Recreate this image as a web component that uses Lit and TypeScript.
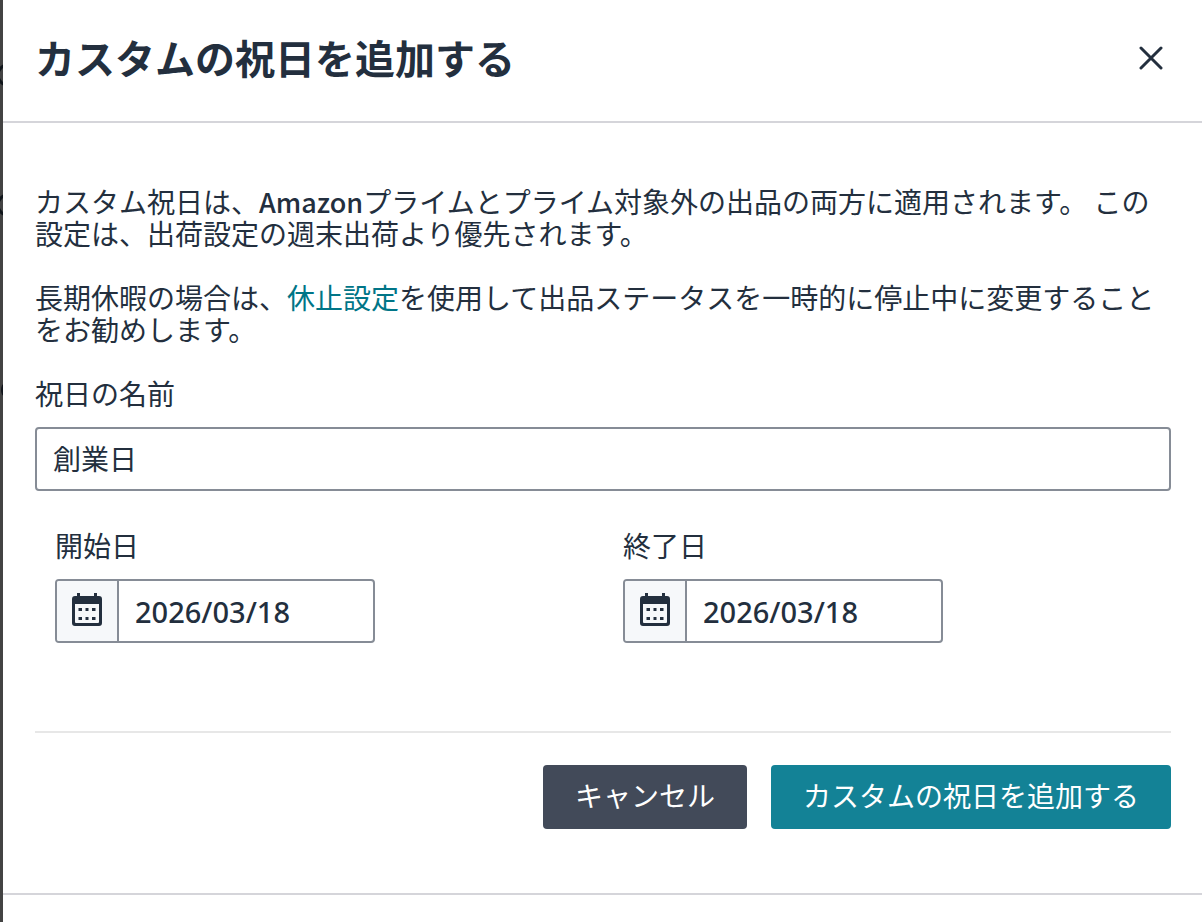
import { LitElement, html, css } from "lit";
import { customElement, property, state } from "lit/decorators.js";

@customElement("date-field")
class DateField extends LitElement {
  @property() label = "";
  @property() value = "";

  static styles = css`
    :host {
      display: block;
    }
    .label {
      display: block;
      line-height: 32px;
      margin-bottom: 18px;
    }
    .box {
      box-sizing: border-box;
      display: flex;
      width: 320px;
      max-width: 100%;
      height: 64px;
      border: 2px solid #868c96;
      border-radius: 4px;
      overflow: hidden;
      background: #fff;
    }
    .toggle {
      display: flex;
      align-items: flex-start;
      justify-content: center;
      flex: none;
      width: 62px;
      margin: 0;
      padding: 12px 0 0;
      border: 0;
      border-right: 2px solid #868c96;
      background: #f6f8fa;
      color: #232f3e;
      cursor: pointer;
    }
    .input {
      flex: 1;
      min-width: 0;
      padding: 0 16px;
      border: 0;
      outline: 0;
      background: transparent;
      font-family: "Noto Sans", sans-serif;
      font-size: 29px;
      font-weight: 500;
      color: inherit;
    }
  `;

  render() {
    return html`
      <label class="label" for="date">${this.label}</label>
      <div class="box">
        <button class="toggle" type="button" aria-label=${this.label}>
          <svg width="30" height="33" viewBox="0 0 30 33" aria-hidden="true">
            <path
              fill="currentColor"
              fill-rule="evenodd"
              d="M5 0h3v3h14V0h3v3h2a3 3 0 0 1 3 3v24a3 3 0 0 1-3 3H3a3 3 0 0 1-3-3V6a3 3 0 0 1 3-3h2zM3 11v18a1 1 0 0 0 1 1h22a1 1 0 0 0 1-1V11z"
            />
            <path
              fill="currentColor"
              d="M6.500 15h3.500v3h-3.500zM13.500 15h3v3h-3zM20 15h3.500v3H20zM6.500 24h3.500v3h-3.500zM13.500 24h3v3h-3zM20 24h3.500v3H20z"
            />
          </svg>
        </button>
        <input class="input" id="date" type="text" .value=${this.value} />
      </div>
    `;
  }
}

@customElement("app-root")
class AppRoot extends LitElement {
  @state() private holiday = "創業日";

  static styles = css`
    :host {
      display: flex;
      min-height: 100vh;
      font-family: "Noto Sans CJK JP", "Noto Sans", sans-serif;
      font-size: 28px;
      line-height: 32px;
      color: #232f3e;
      background: #fff;
    }
    .backdrop {
      flex: none;
      width: 3px;
      background: #434343;
    }
    .shade {
      display: block;
    }
    .dialog {
      flex: 1;
      min-width: 0;
    }
    .header {
      display: flex;
      align-items: flex-start;
      justify-content: space-between;
      padding: 26px 31px 32px 32px;
      border-bottom: 2px solid #d5d5da;
    }
    .title {
      margin: 0;
      font-size: 40px;
      line-height: 63px;
      font-weight: 700;
    }
    .close {
      display: flex;
      padding: 20px 8px 16px;
      margin: 0;
      border: 0;
      background: none;
      color: inherit;
      cursor: pointer;
    }
    .body {
      padding: 62px 31px 64px 32px;
      border-bottom: 2px solid #d5d5da;
    }
    .text {
      margin: 0 0 32px;
    }
    .latin {
      font-size: 27px;
      line-height: 1;
      font-weight: 500;
    }
    .link {
      color: #007587;
      text-decoration: none;
    }
    .label {
      display: block;
      margin-bottom: 18px;
    }
    .name {
      box-sizing: border-box;
      display: block;
      width: 100%;
      height: 64px;
      padding: 0 16px 2px;
      border: 2px solid #868c96;
      border-radius: 4px;
      outline: 0;
      background: #fff;
      font: inherit;
      color: inherit;
    }
    .dates {
      display: grid;
      grid-template-columns: 1fr 1fr;
      padding: 38px 0 88px;
      border-bottom: 2px solid #e7e7e7;
    }
    .date {
      padding: 0 20px;
    }
    .actions {
      display: flex;
      justify-content: flex-end;
      gap: 24px;
      padding-top: 32px;
    }
    .button {
      height: 64px;
      margin: 0;
      padding: 0 32px 4px;
      border: 0;
      border-radius: 4px;
      font: inherit;
      color: #fff;
      background: #424a59;
      cursor: pointer;
    }
    .primary {
      background: #138296;
    }
  `;

  render() {
    return html`
      <div class="backdrop">
        <svg class="shade" width="3" height="400" viewBox="0 0 3 400" aria-hidden="true">
          <g fill="none" stroke="#10151b" stroke-width="3">
            <circle cx="8" cy="75" r="10" />
            <circle cx="8" cy="205" r="10" />
          </g>
          <ellipse cx="4" cy="390" rx="3" ry="6" fill="#10151b" />
        </svg>
      </div>
      <section class="dialog" role="dialog" aria-labelledby="title">
        <header class="header">
          <h1 class="title" id="title">カスタムの祝日を追加する</h1>
          <button class="close" type="button" aria-label="閉じる">
            <svg width="24" height="24" viewBox="0 0 24 24" aria-hidden="true">
              <path
                d="M2 2l20 20M22 2L2 22"
                fill="none"
                stroke="currentColor"
                stroke-width="3"
                stroke-linecap="round"
              />
            </svg>
          </button>
        </header>
        <div class="body">
          <p class="text">
            カスタム祝日は、<span class="latin">Amazon</span>プライムとプライム対象外の出品の両方に適用されます。 この設定は、出荷設定の週末出荷より優先されます。
          </p>
          <p class="text">
            長期休暇の場合は、<a class="link" href="#">休止設定</a>を使用して出品ステータスを一時的に停止中に変更することをお勧めします。
          </p>
          <label class="label" for="name">祝日の名前</label>
          <input
            class="name"
            id="name"
            type="text"
            .value=${this.holiday}
            @input=${(e: Event) => (this.holiday = (e.target as HTMLInputElement).value)}
          />
          <div class="dates">
            <date-field class="date" label="開始日" value="2026/03/18"></date-field>
            <date-field class="date" label="終了日" value="2026/03/18"></date-field>
          </div>
          <div class="actions">
            <button class="button" type="button">キャンセル</button>
            <button class="button primary" type="button">カスタムの祝日を追加する</button>
          </div>
        </div>
      </section>
    `;
  }
}
